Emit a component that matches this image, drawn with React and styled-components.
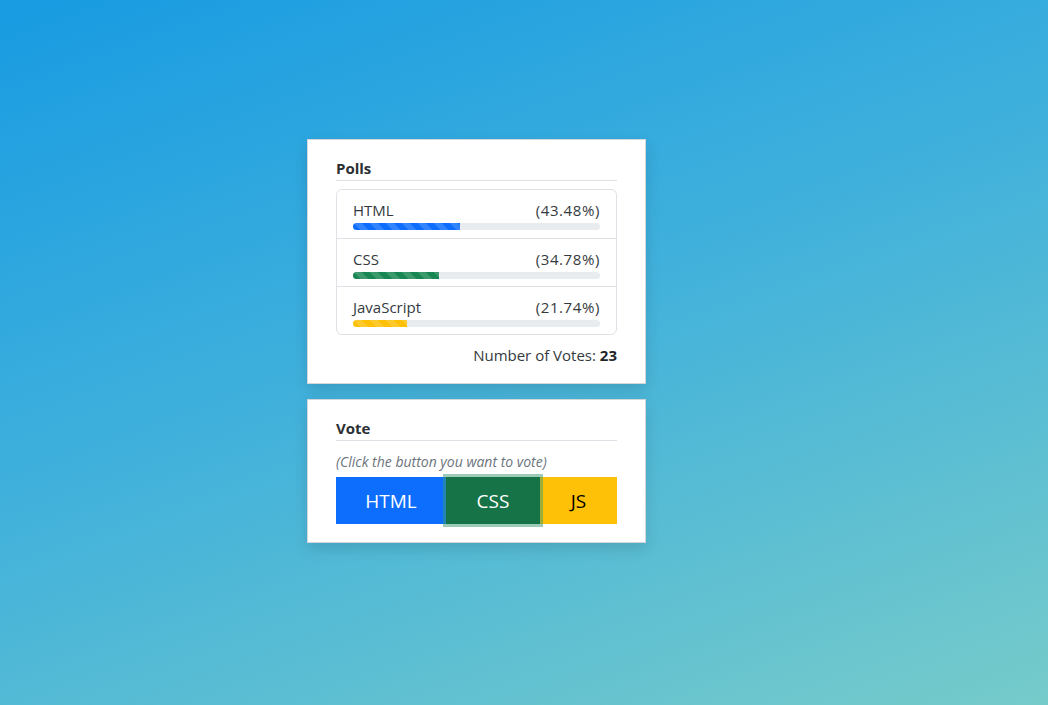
import React from 'react';
import styled, { createGlobalStyle, css } from 'styled-components';

const GlobalStyle = createGlobalStyle`
  * { box-sizing: border-box; }
  html, body { margin: 0; padding: 0; }
  body {
    min-height: 705px;
    font-family: "Open Sans", "Noto Sans", sans-serif;
    color: #212529;
    background: linear-gradient(160deg, #189be2 0%, #3fb0dc 45%, #76cbca 100%);
  }
`;

const polls = [
  { name: 'HTML', pct: 43.48, color: '#0d6efd' },
  { name: 'CSS', pct: 34.78, color: '#198754' },
  { name: 'JavaScript', pct: 21.74, color: '#ffc107' },
];

const buttons = [
  { label: 'HTML', bg: '#0d6efd', fg: '#fff', width: 110 },
  { label: 'CSS', bg: '#157347', fg: '#fff', width: 94, focus: true },
  { label: 'JS', bg: '#ffc107', fg: '#000', width: 77 },
];

const App = () => {
  return (
    <>
      <GlobalStyle />
      <Page>
        <Column>
          <Card $pb={19}>
            <Title>Polls</Title>
            <List>
              {polls.map((p) => (
                <Item key={p.name}>
                  <ItemHead>
                    <span>{p.name}</span>
                    <Pct>({p.pct.toFixed(2)}%)</Pct>
                  </ItemHead>
                  <Track>
                    <Bar $color={p.color} style={{ width: `${p.pct}%` }} />
                  </Track>
                </Item>
              ))}
            </List>
            <Votes>
              Number of Votes: <strong>23</strong>
            </Votes>
          </Card>
          <Card $pb={18}>
            <Title>Vote</Title>
            <Hint>(Click the button you want to vote)</Hint>
            <BtnGroup>
              {buttons.map((b) => (
                <VoteBtn key={b.label} $bg={b.bg} $fg={b.fg} $w={b.width} $focus={b.focus}>
                  {b.label}
                </VoteBtn>
              ))}
            </BtnGroup>
          </Card>
        </Column>
      </Page>
    </>
  );
};

const Page = styled.div`
  padding: 139px 0 0 307px;
`;

const Column = styled.div`
  width: 339px;
  display: flex;
  flex-direction: column;
  gap: 15px;
`;

const Card = styled.div`
  background: #fff;
  border: 1px solid #d4d7da;
  box-shadow: 0 6px 14px rgba(0, 0, 0, 0.12);
  padding: 19px 28px ${(p) => p.$pb}px 28px;
`;

const Title = styled.div`
  font-size: 15px;
  font-weight: 700;
  color: #2b2f33;
  padding-bottom: 3px;
  border-bottom: 1px solid #dee2e6;
  line-height: 18px;
`;

const List = styled.div`
  margin-top: 8px;
  border: 1px solid #dee2e6;
  border-radius: 6px;
`;

const Item = styled.div`
  height: 48px;
  padding: 10px 16px 0 16px;
  & + & { border-top: 1px solid #dee2e6; }
`;

const ItemHead = styled.div`
  display: flex;
  justify-content: space-between;
  font-size: 15px;
  line-height: 20px;
  color: #343a40;
`;

const Pct = styled.span`
  letter-spacing: 0.6px;
`;

const Track = styled.div`
  margin-top: 3px;
  height: 7px;
  border-radius: 4px;
  background: #e9ecef;
  overflow: hidden;
`;

const Bar = styled.div`
  height: 100%;
  background-color: ${(p) => p.$color};
  background-image: linear-gradient(
    45deg,
    rgba(255, 255, 255, 0.15) 25%,
    transparent 25%,
    transparent 50%,
    rgba(255, 255, 255, 0.15) 50%,
    rgba(255, 255, 255, 0.15) 75%,
    transparent 75%,
    transparent
  );
  background-size: 16px 16px;
`;

const Votes = styled.div`
  text-align: right;
  font-size: 15px;
  margin-top: 11px;
  line-height: 18px;
  color: #343a40;
  strong { color: #212529; }
`;

const Hint = styled.div`
  margin-top: 12px;
  font-size: 14px;
  font-style: italic;
  color: #6c757d;
  line-height: 18px;
`;

const BtnGroup = styled.div`
  display: flex;
  margin-top: 6px;
`;

const VoteBtn = styled.button`
  flex: 0 0 ${(p) => p.$w}px;
  height: 47px;
  border: none;
  background: ${(p) => p.$bg};
  color: ${(p) => p.$fg};
  font-family: inherit;
  font-size: 19px;
  cursor: pointer;
  position: relative;
  ${(p) =>
    p.$focus &&
    css`
      z-index: 1;
      box-shadow: 0 0 0 3px rgba(60, 153, 110, 0.5);
    `}
`;

export default App;
